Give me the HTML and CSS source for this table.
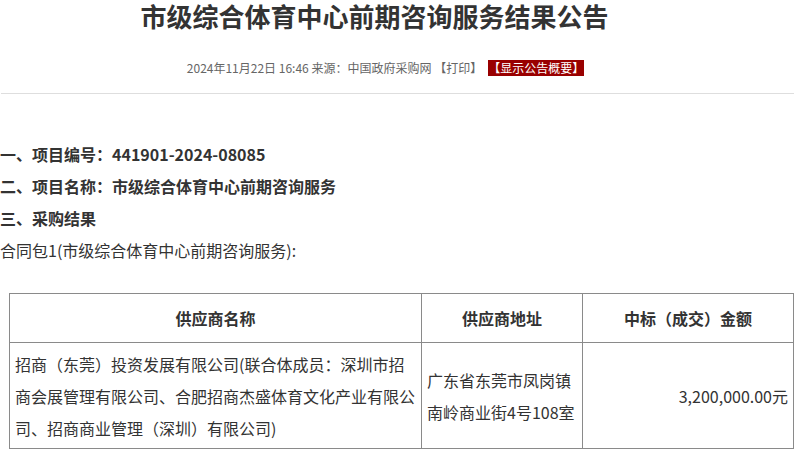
FILE: index.html
```html
<!DOCTYPE html>
<html lang="zh-CN">
<head>
<meta charset="utf-8">
<title>市级综合体育中心前期咨询服务结果公告</title>
<link rel="stylesheet" href="styles.css">
</head>
<body>
<div class="page">
  <h1 class="title">市级综合体育中心前期咨询服务结果公告</h1>
  <p class="meta">2024年11月22日 16:46 来源：中国政府采购网 <span class="print">【打印】</span><span class="summary">【显示公告概要】</span></p>
  <div class="divider"></div>
  <div class="content">
    <p class="heading">一、项目编号：441901-2024-08085</p>
    <p class="heading">二、项目名称：市级综合体育中心前期咨询服务</p>
    <p class="heading">三、采购结果</p>
    <p class="para">合同包1(市级综合体育中心前期咨询服务):</p>
    <table class="result">
      <colgroup>
        <col class="c1">
        <col class="c2">
        <col class="c3">
      </colgroup>
      <thead>
        <tr>
          <th>供应商名称</th>
          <th>供应商地址</th>
          <th>中标（成交）金额</th>
        </tr>
      </thead>
      <tbody>
        <tr>
          <td>招商（东莞）投资发展有限公司(联合体成员：深圳市招商会展管理有限公司、合肥招商杰盛体育文化产业有限公司、招商商业管理（深圳）有限公司)</td>
          <td>广东省东莞市凤岗镇南岭商业街4号108室</td>
          <td class="amount">3,200,000.00元</td>
        </tr>
      </tbody>
    </table>
  </div>
</div>
</body>
</html>
```

FILE: styles.css
```css
html, body {
  margin: 0;
  padding: 0;
  background: #fff;
}

body {
  font-family: "Noto Sans CJK SC", "Noto Sans", sans-serif;
  color: #333;
}

.page {
  width: 794px;
}

.title {
  margin: 0;
  padding-right: 45px;
  font-size: 26px;
  line-height: 32px;
  font-weight: bold;
  color: #333;
  text-align: center;
}

.meta {
  margin: 28px 0 0;
  padding-right: 23px;
  font-size: 12px;
  line-height: 16px;
  height: 16px;
  color: #666;
  text-align: center;
}

.print {
  margin-right: 6px;
}

.summary {
  display: inline-block;
  height: 16px;
  line-height: 16px;
  background: #990000;
  color: #fff;
  vertical-align: top;
}

.divider {
  margin: 17px 0 0 1px;
  height: 1px;
  background: #dedede;
}

.content {
  padding-top: 44px;
}

.heading,
.para {
  margin: 0;
  font-size: 16px;
  line-height: 32px;
}

.heading {
  font-weight: bold;
}

.result {
  margin: 27px 0 0 9px;
  width: 784px;
  border-collapse: collapse;
  table-layout: fixed;
  font-size: 16px;
  color: #333;
}

.c1 { width: 412px; }
.c2 { width: 161px; }
.c3 { width: 211px; }

.result th,
.result td {
  border: 1px solid #8a8a8a;
  padding: 0 5px;
  vertical-align: middle;
}

.result th {
  height: 48px;
  line-height: 32px;
  font-weight: bold;
  text-align: center;
}

.result td {
  height: 105px;
  line-height: 32px;
  text-align: left;
}

.result td.amount {
  text-align: right;
}
```
